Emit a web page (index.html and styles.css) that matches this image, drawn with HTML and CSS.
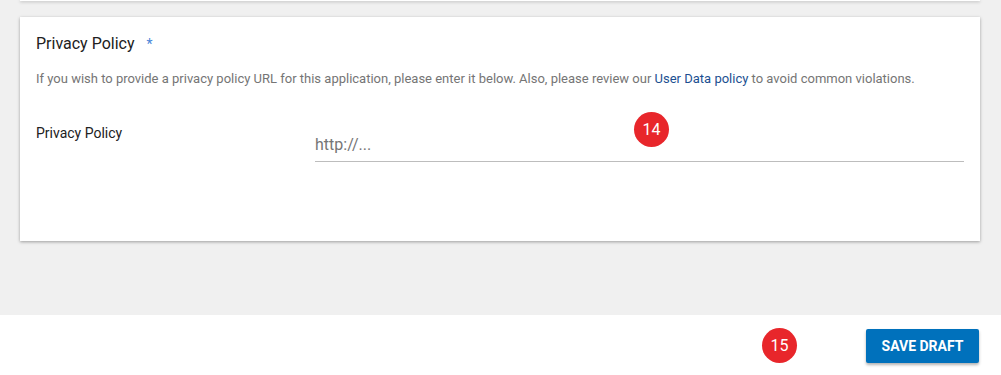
FILE: index.html
```html
<!DOCTYPE html>
<html lang="en">
<head>
    <meta charset="UTF-8">
    <meta name="viewport" content="width=device-width, initial-scale=1.0">
    <title>Privacy Policy</title>
    <link rel="stylesheet" href="styles.css">
</head>
<body>
    <div class="conteudo">
        <div class="cartao cartaoAnterior"></div>
        <div class="cartao">
            <h2 class="titulo">Privacy Policy <span class="obrigatorio">*</span></h2>
            <p class="descricao">If you wish to provide a privacy policy URL for this application, please enter it below. Also, please review our <a href="#">User Data policy</a> to avoid common violations.</p>
            <div class="linha">
                <label class="rotulo" for="urlPolitica">Privacy Policy</label>
                <input type="text" id="urlPolitica" class="campo" placeholder="http://...">
            </div>
        </div>
    </div>
    <div class="rodape">
        <button class="botaoSalvar">SAVE DRAFT</button>
    </div>

    <span class="marcador marcador14">14</span>
    <span class="marcador marcador15">15</span>
</body>
</html>
```

FILE: styles.css
```css
body {
    margin: 0;
    font-family: Roboto, "Liberation Sans", sans-serif;
    background: #fff;
    color: #212121;
}
.conteudo {
    background: #f0f0f0;
    height: 315px;
    padding: 0 21px 0 20px;
    box-sizing: border-box;
    overflow: hidden;
}
.cartao {
    background: #fff;
    box-shadow: 0 1px 3px rgba(0, 0, 0, 0.35);
    padding: 15px 16px;
    height: 224px;
    margin-top: 16px;
    box-sizing: border-box;
}
.cartaoAnterior {
    height: 1px;
    padding: 0;
    margin-top: 0;
}
.titulo {
    margin: 0;
    font-size: 16px;
    line-height: 24px;
    font-weight: 400;
    color: #212121;
}
.obrigatorio {
    color: #4a86d8;
    margin-left: 8px;
    font-size: 14px;
}
.descricao {
    margin: 13px 0 0;
    font-size: 13px;
    line-height: 20px;
    color: #757575;
}
.descricao a {
    color: #1c4f91;
    text-decoration: none;
}
.linha {
    display: flex;
    margin-top: 34px;
}
.rotulo {
    width: 279px;
    flex-shrink: 0;
    font-size: 14px;
    line-height: 20px;
    color: #212121;
}
.campo {
    flex: 1;
    height: 34px;
    margin-top: 5px;
    padding: 0;
    box-sizing: border-box;
    border: none;
    border-bottom: 1px solid #bdbdbd;
    font-family: Roboto, "Liberation Sans", sans-serif;
    font-size: 16px;
    color: #212121;
    outline: none;
}
.campo::placeholder {
    color: #757575;
}
.rodape {
    height: 60px;
    display: flex;
    justify-content: flex-end;
    align-items: flex-start;
    padding: 14px 22px 0 0;
    box-sizing: border-box;
}
.botaoSalvar {
    width: 113px;
    height: 34px;
    background: #0071bc;
    color: #fff;
    border: none;
    border-radius: 2px;
    font-family: Roboto, "Liberation Sans", sans-serif;
    font-size: 14px;
    font-weight: 700;
    box-shadow: 0 2px 3px rgba(0, 0, 0, 0.3);
    cursor: pointer;
}
.marcador {
    position: absolute;
    width: 35px;
    height: 35px;
    border-radius: 50%;
    background: #e8262b;
    color: #fff;
    font-size: 16px;
    line-height: 35px;
    text-align: center;
}
.marcador14 {
    left: 634px;
    top: 112px;
}
.marcador15 {
    left: 762px;
    top: 328px;
}
```
